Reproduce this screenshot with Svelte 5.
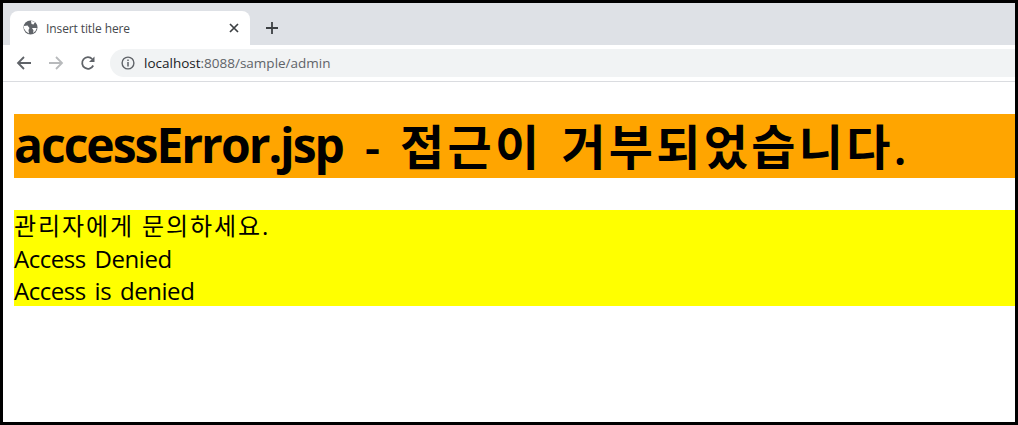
<script>
    let title = 'Insert title here'
</script>

<div class="frame">
    <div class="tabStrip">
        <div class="tab">
            <svg class="globe" width="16" height="16" viewBox="0 0 16 16">
                <circle cx="7.5" cy="7.5" r="7" fill="#5f6368"/>
                <path d="M1 6 L4.5 5.5 L6.5 8 L5.5 10 L6 13.5 L3 11.5 L1 8.5 Z M8 .8 L12 2 L10.5 4.5 L8.5 4 Z M9 8 L13.8 8 L12.5 11 L10 13 L10.5 10.5 Z" fill="#fff"/>
            </svg>
            <span class="tabTitle">{title}</span>
            <svg class="close" width="10" height="10" viewBox="0 0 10 10">
                <path d="M1 1 L9 9 M9 1 L1 9" stroke="#3c4043" stroke-width="1.7" fill="none"/>
            </svg>
        </div>
        <svg class="plus" width="12" height="12" viewBox="0 0 12 12">
            <path d="M6 0 V12 M0 6 H12" stroke="#3c4043" stroke-width="1.8" fill="none"/>
        </svg>
    </div>
    <div class="toolbar">
        <svg width="16" height="16" viewBox="0 0 16 16">
            <path d="M15 8 H2 M8 2 L2 8 L8 14" stroke="#5f6368" stroke-width="1.8" fill="none"/>
        </svg>
        <svg width="16" height="16" viewBox="0 0 16 16">
            <path d="M1 8 H14 M8 2 L14 8 L8 14" stroke="#b8babc" stroke-width="1.8" fill="none"/>
        </svg>
        <svg width="16" height="16" viewBox="0 0 16 16">
            <path d="M13.2 10.5 A5.8 5.8 0 1 1 12.2 4" stroke="#5f6368" stroke-width="1.8" fill="none"/>
            <path d="M14.5 1.5 V7 H9 Z" fill="#5f6368"/>
        </svg>
        <div class="omnibox">
            <svg width="14" height="14" viewBox="0 0 14 14">
                <circle cx="7" cy="7" r="5.9" stroke="#5f6368" stroke-width="1.4" fill="none"/>
                <path d="M7 6 V10.5 M7 3.4 V5" stroke="#5f6368" stroke-width="1.5" fill="none"/>
            </svg>
            <span class="url"><b>localhost</b>:8088/sample/admin</span>
        </div>
    </div>
    <div class="page">
        <h1><span class="en">accessError.jsp</span><span class="dash">-</span><span class="ko">접근이</span><span class="ko">거부되었습니다.</span></h1>
        <div class="msg">
            <div class="ko">관리자에게 문의하세요.</div>
            <div class="en">Access Denied</div>
            <div class="en">Access is denied</div>
        </div>
    </div>
</div>

<style>
    :global(body){
        margin: 0;
        background: white;
    }
    .frame{
        box-sizing: border-box;
        width: 1018px;
        height: 425px;
        border: 3px solid #000000;
        overflow: hidden;
        font-family: "Open Sans", "Noto Sans CJK KR", sans-serif;
    }
    .tabStrip{
        display: flex;
        align-items: flex-end;
        height: 42px;
        padding-left: 7px;
        background: #dee1e6;
    }
    .tab{
        display: flex;
        align-items: center;
        box-sizing: border-box;
        width: 240px;
        height: 34px;
        padding: 0 11px 0 13px;
        background: white;
        border-radius: 8px 8px 0 0;
    }
    .globe{
        flex: none;
    }
    .tabTitle{
        flex: 1;
        margin-left: 7px;
        font-size: 12px;
        color: #45494d;
        letter-spacing: -.1px;
    }
    .plus{
        margin: 0 0 11px 16px;
    }
    .toolbar{
        display: flex;
        align-items: center;
        gap: 16px;
        box-sizing: border-box;
        height: 37px;
        padding: 0 0 1px 13px;
        background: white;
        border-bottom: 1px solid #dadce0;
    }
    .omnibox{
        display: flex;
        align-items: center;
        flex: 1;
        gap: 9px;
        height: 28px;
        margin-left: -2px;
        padding-left: 11px;
        background: #f1f3f4;
        border-radius: 14px 0 0 14px;
    }
    .url{
        font-size: 13.5px;
        color: #5f6368;
    }
    .url b{
        font-weight: 400;
        color: #202124;
    }
    .page{
        padding: 32px 0 0 11px;
        color: #000000;
    }
    h1{
        display: flex;
        margin: 0 0 32px;
        height: 64px;
        line-height: 62px;
        font-size: 48px;
        font-weight: 700;
        white-space: nowrap;
        background: orange;
    }
    h1 .en{
        width: 331px;
        letter-spacing: -2px;
    }
    h1 .dash{
        width: 55px;
        line-height: 66px;
        text-align: center;
        font-weight: 600;
    }
    h1 .ko{
        margin-right: 19px;
        line-height: 66px;
        font-weight: 600;
        letter-spacing: 3.3px;
    }
    .msg{
        font-size: 24px;
        line-height: 32px;
        background: yellow;
    }
    .msg .ko{
        font-weight: 400;
        letter-spacing: 1.9px;
    }
    .msg .en{
        height: 32px;
        line-height: 34px;
        font-weight: 400;
        letter-spacing: -.45px;
        word-spacing: 3px;
    }
</style>
